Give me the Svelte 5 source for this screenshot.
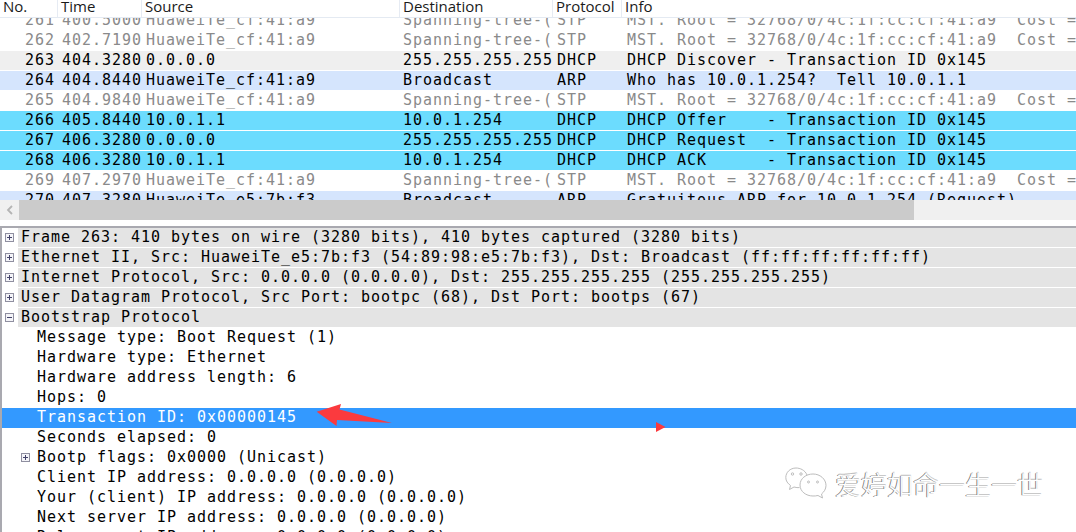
<script>
  const stp = ['Spanning-tree-(', 'STP', 'MST. Root = 32768/0/4c:1f:cc:cf:41:a9  Cost ='];
  const hw = 'HuaweiTe_cf:41:a9';
  const packets = [
    ['261', '400.5000', hw, ...stp, 'stp'],
    ['262', '402.7190', hw, ...stp, 'stp'],
    ['263', '404.3280', '0.0.0.0', '255.255.255.255', 'DHCP', 'DHCP Discover - Transaction ID 0x145', 'cur'],
    ['264', '404.8440', hw, 'Broadcast', 'ARP', 'Who has 10.0.1.254?  Tell 10.0.1.1', 'arp'],
    ['265', '404.9840', hw, ...stp, 'stp'],
    ['266', '405.8440', '10.0.1.1', '10.0.1.254', 'DHCP', 'DHCP Offer    - Transaction ID 0x145', 'dhcp'],
    ['267', '406.3280', '0.0.0.0', '255.255.255.255', 'DHCP', 'DHCP Request  - Transaction ID 0x145', 'dhcp'],
    ['268', '406.3280', '10.0.1.1', '10.0.1.254', 'DHCP', 'DHCP ACK      - Transaction ID 0x145', 'dhcp'],
    ['269', '407.2970', hw, ...stp, 'stp'],
    ['270', '407.3280', 'HuaweiTe_e5:7b:f3', 'Broadcast', 'ARP', 'Gratuitous ARP for 10.0.1.254 (Request)', 'arp']
  ];
  const details = [
    { t: 'Frame 263: 410 bytes on wire (3280 bits), 410 bytes captured (3280 bits)', k: 'top', i: '+' },
    { t: 'Ethernet II, Src: HuaweiTe_e5:7b:f3 (54:89:98:e5:7b:f3), Dst: Broadcast (ff:ff:ff:ff:ff:ff)', k: 'top', i: '+' },
    { t: 'Internet Protocol, Src: 0.0.0.0 (0.0.0.0), Dst: 255.255.255.255 (255.255.255.255)', k: 'top', i: '+' },
    { t: 'User Datagram Protocol, Src Port: bootpc (68), Dst Port: bootps (67)', k: 'top', i: '+' },
    { t: 'Bootstrap Protocol', k: 'top', i: '-' },
    { t: 'Message type: Boot Request (1)', k: 'sub' },
    { t: 'Hardware type: Ethernet', k: 'sub' },
    { t: 'Hardware address length: 6', k: 'sub' },
    { t: 'Hops: 0', k: 'sub' },
    { t: 'Transaction ID: 0x00000145', k: 'sub sel' },
    { t: 'Seconds elapsed: 0', k: 'sub' },
    { t: 'Bootp flags: 0x0000 (Unicast)', k: 'sub', i: '+' },
    { t: 'Client IP address: 0.0.0.0 (0.0.0.0)', k: 'sub' },
    { t: 'Your (client) IP address: 0.0.0.0 (0.0.0.0)', k: 'sub' },
    { t: 'Next server IP address: 0.0.0.0 (0.0.0.0)', k: 'sub' },
    { t: 'Relay agent IP address: 0.0.0.0 (0.0.0.0)', k: 'sub' }
  ];
</script>

<div class="shot">
  <div class="head">
    <span class="h no">No.</span>
    <span class="h time">Time</span>
    <span class="h src">Source</span>
    <span class="h dst">Destination</span>
    <span class="h proto">Protocol</span>
    <span class="h info">Info</span>
  </div>

  <div class="list">
    <div class="rows">
      {#each packets as p}
        <div class="row {p[6]}">
          <span class="c no">{p[0]}</span>
          <span class="c time">{p[1]}</span>
          <span class="c src">{p[2]}</span>
          <span class="c dst">{p[3]}</span>
          <span class="c proto">{p[4]}</span>
          <span class="c info">{p[5]}</span>
        </div>
      {/each}
    </div>
  </div>

  <div class="scroll">
    <svg class="chev" width="10" height="12" viewBox="0 0 10 12"><path d="M7 2 3 6l4 4" fill="none" stroke="#b4b4b4" stroke-width="1.8"/></svg>
    <div class="thumb"></div>
  </div>

  <div class="tree">
    {#each details as d}
      <div class="node {d.k}">
        {#if d.i}
          <svg class="exp" width="9" height="9" viewBox="0 0 9 9">
            <rect x=".5" y=".5" width="8" height="8" fill="#f4f4f8" stroke="#8f8fa0"/>
            <path d={d.i === '+' ? 'M2 4.5h5M4.5 2v5' : 'M2 4.5h5'} stroke="#44446a"/>
          </svg>
        {/if}
        <span class="label">{d.t}</span>
      </div>
    {/each}
  </div>

  <svg class="marks" width="1076" height="532" viewBox="0 0 1076 532">
    <path d="M316.7 411.7 341 404l-1.5 5.5L392 423l-55-3-.5 6z" fill="#fb3a3e"/>
    <path d="M656 422l9.5 5-9.5 5z" fill="#fb3a3e"/>
  </svg>

  <div class="mark">
    <svg width="42" height="38" viewBox="0 0 42 38" fill="none" stroke="#bdbdbd" stroke-width="1">
      <path d="M22 10C20 5 15 3 11 3 5 3 .8 7.500.8 12.500c0 3.500 2 6 4.700 8l-1 4 4.500-2.500c2 .6 4 .8 5.500.6"/>
      <path d="M28 9c7 0 13 5 13 11.500 0 3.500-2 6.500-4.500 8.500l1 4-4.500-2.500C31 31 29.500 31 28 31c-7 0-13-4.500-13-11S21 9 28 9z"/>
      <circle cx="7.500" cy="9" r="1.200"/><circle cx="16" cy="9" r="1.200"/>
      <circle cx="23.500" cy="17" r="1"/><circle cx="32.500" cy="17" r="1"/>
    </svg>
    <span class="mark-text">爱婷如命一生一世</span>
  </div>
</div>

<style>
  :global(body) { margin: 0; background: #fff; }
  .shot {
    position: relative;
    width: 1076px;
    height: 532px;
    overflow: hidden;
    background: #fff;
    font-family: "DejaVu Sans Mono", monospace;
    font-size: 15px;
    letter-spacing: 0.97px;
    color: #000;
  }
  .head {
    display: flex;
    height: 17px;
    border-bottom: 1px solid #e4eaf2;
    font-family: "Open Sans", sans-serif;
    font-size: 15px;
    letter-spacing: 0;
    line-height: 12px;
    color: #1a1a1a;
    white-space: nowrap;
    overflow: hidden;
  }
  .h { box-sizing: border-box; border-right: 1px solid #e6ebf3; padding-left: 3px; }
  .no { width: 58px; flex: none; }
  .time { width: 84px; flex: none; }
  .src { width: 258px; flex: none; }
  .dst { width: 153px; flex: none; }
  .proto { width: 69px; flex: none; }
  .info { flex: 1; }
  .h.info { border-right: 0; }

  .list { height: 182px; overflow: hidden; }
  .rows { margin-top: -7px; }
  .row {
    display: flex;
    height: 19px;
    margin-bottom: 1px;
    line-height: 19px;
    white-space: pre;
  }
  .c { box-sizing: border-box; overflow: hidden; padding-left: 4px; }
  .c.no { text-align: right; padding: 0 3px 0 0; }
  .c.dst { padding-left: 3px; }
  .c.info { padding-left: 5px; }
  .stp { color: #8a8a8a; }
  .cur { background: #efefef; }
  .arp { background: #d5e5fd; }
  .dhcp { background: #6cdcfe; }

  .scroll { display: flex; height: 20px; background: #f0f0f0; }
  .chev { margin: 4px 4px 0 5px; flex: none; }
  .thumb { width: 895px; background: #cbcbcb; }

  .tree {
    box-sizing: border-box;
    height: 306px;
    margin-top: 6px;
    border-top: 2px solid #a9a9b0;
    border-left: 2px solid #a9a9b0;
    overflow: hidden;
  }
  .node {
    position: relative;
    height: 19px;
    margin-bottom: 1px;
    line-height: 19px;
  }
  .label { white-space: pre; }
  .node.top { margin-left: 16px; padding-left: 3px; background: #e4e4e4; }
  .node.sub { padding-left: 35px; }
  .exp { position: absolute; top: 5px; }
  .top .exp { left: -13px; }
  .sub .exp { left: 19px; }
  .sel { background: #3399ff; color: #fff; height: 20px; margin-bottom: 0; }

  .marks { position: absolute; left: 0; top: 0; pointer-events: none; }
  .mark {
    position: absolute;
    left: 785px;
    top: 465px;
    display: flex;
    align-items: center;
    gap: 8px;
    letter-spacing: 0;
  }
  .mark-text {
    font-family: "Noto Sans CJK SC", sans-serif;
    font-size: 26px;
    line-height: 38px;
    font-weight: 300;
    color: #fff;
    text-shadow: -1px 0 0 #7f7f7f, 0 -1px 0 #c8c8c8;
  }
</style>
